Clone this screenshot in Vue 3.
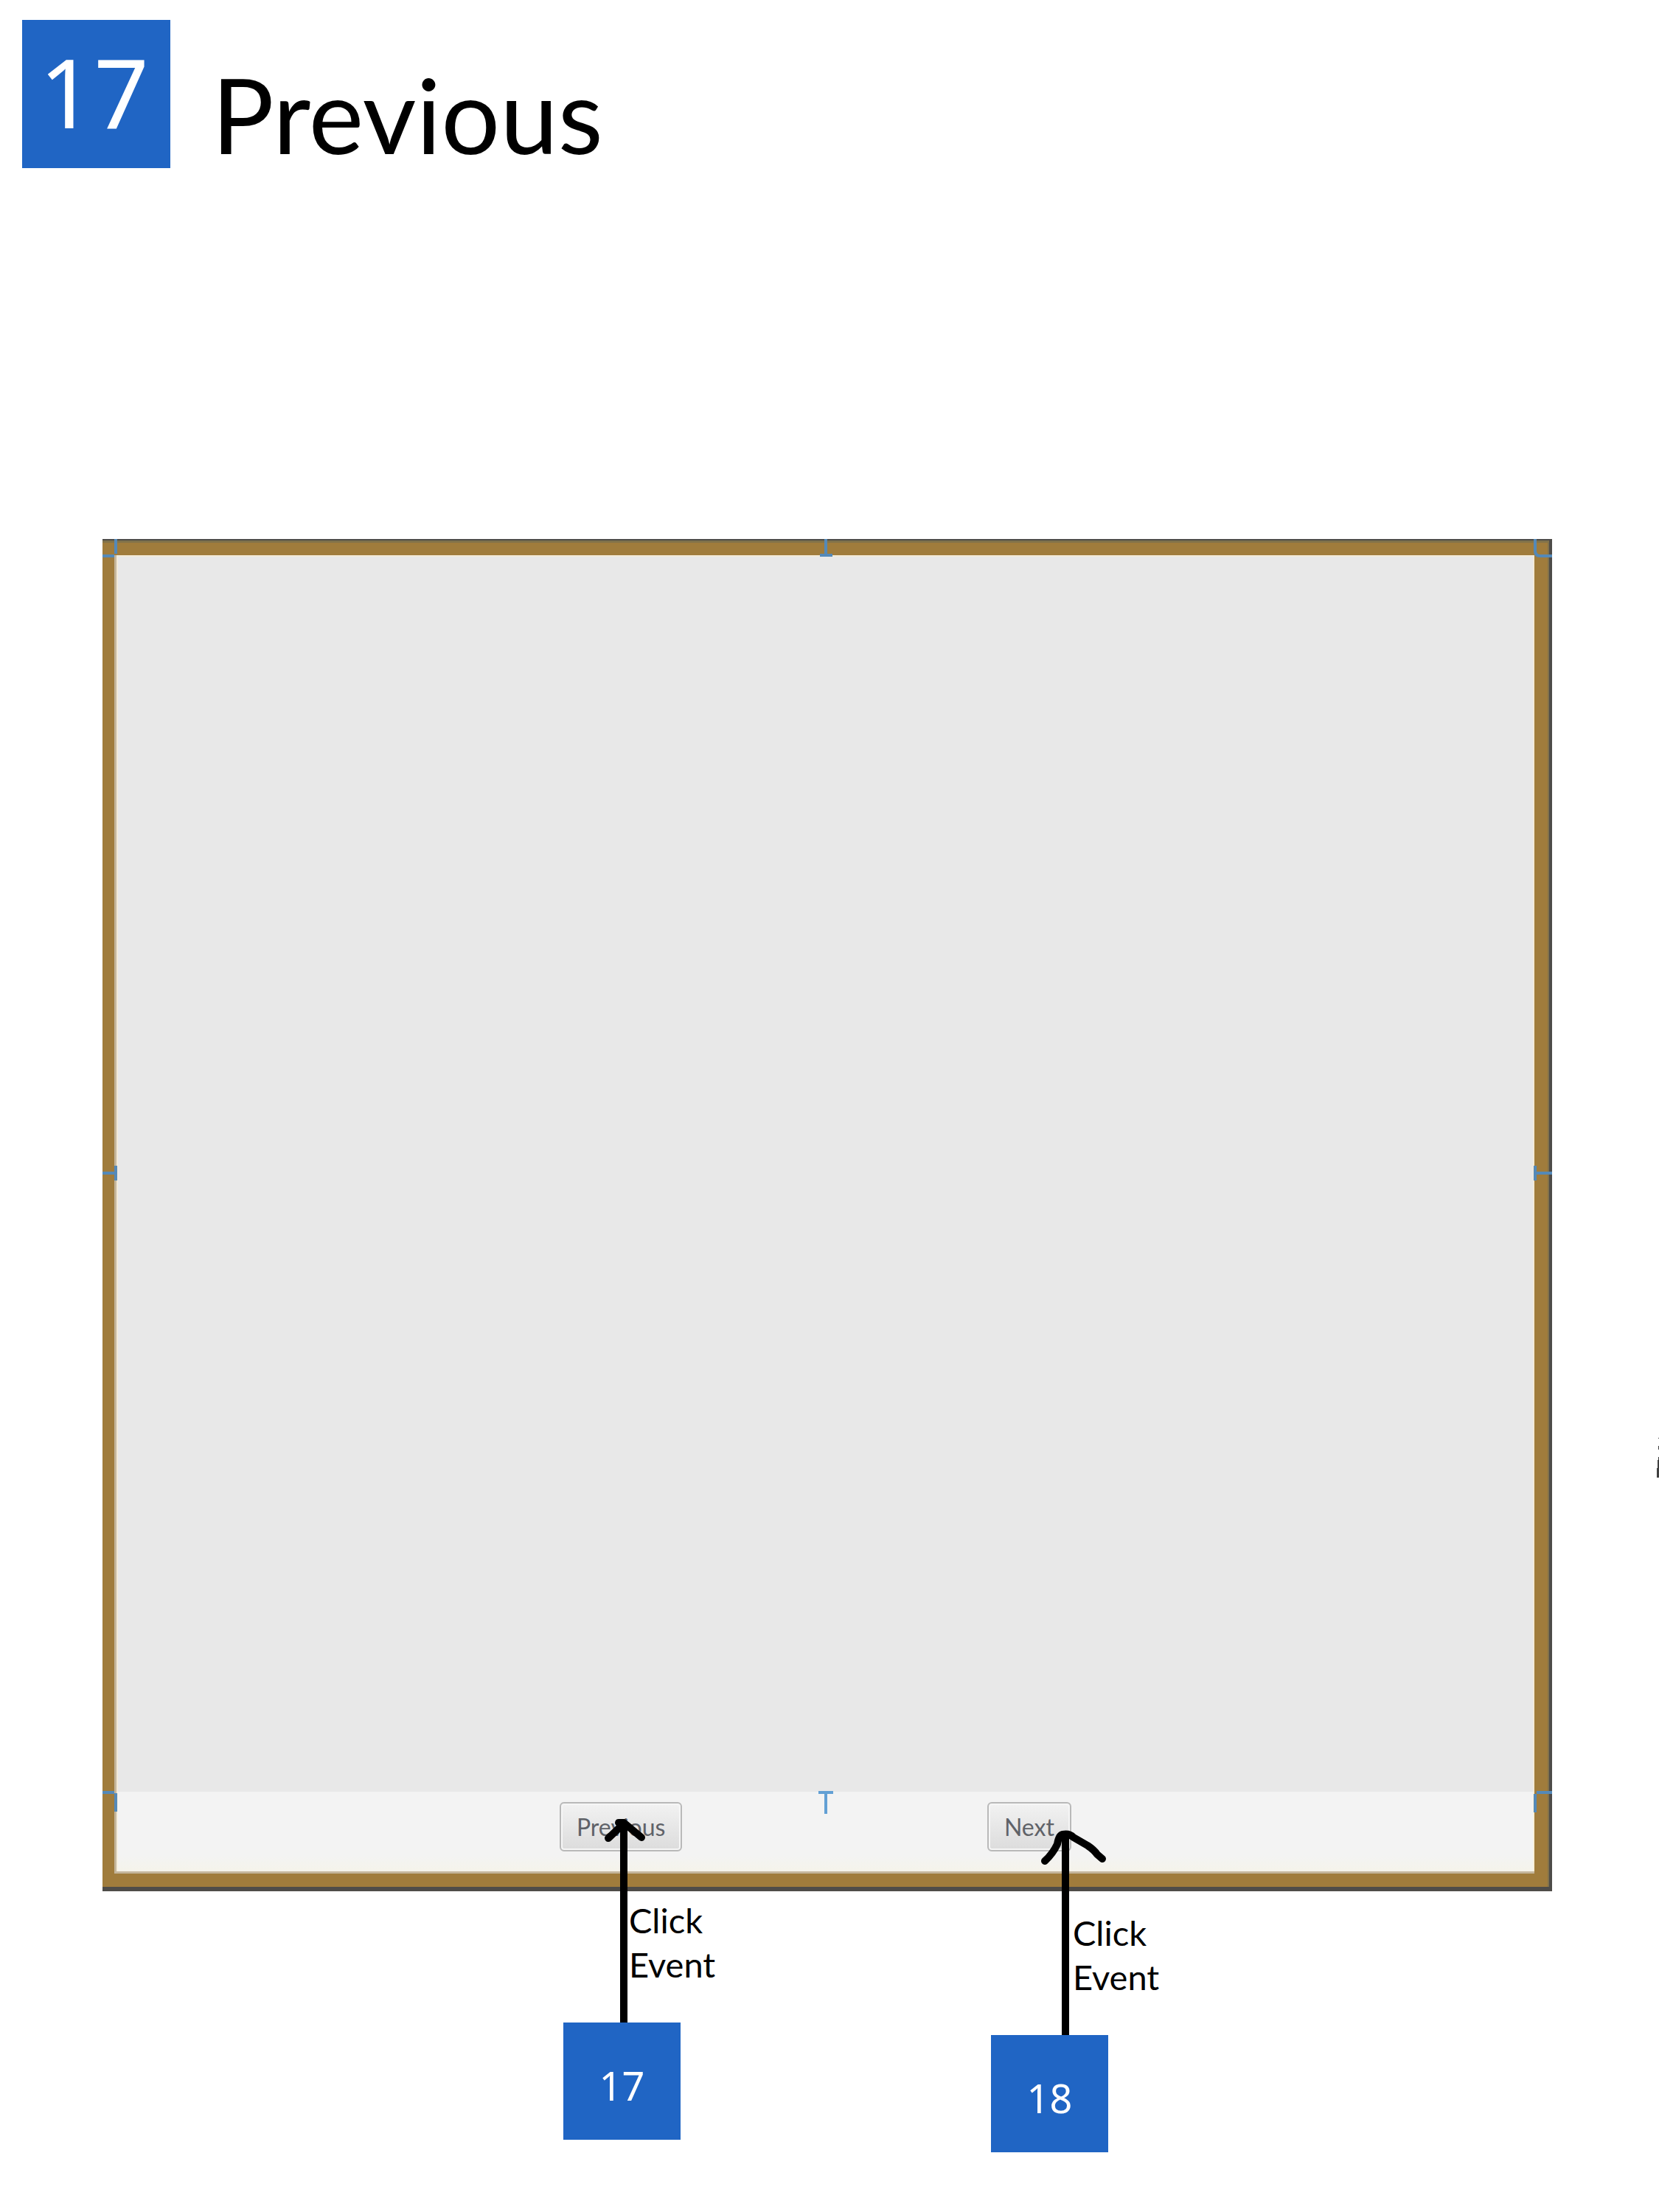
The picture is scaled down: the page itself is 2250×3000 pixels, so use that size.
<script setup>
const controls = [
  {
    id: 'previous',
    label: 'Previous',
    number: 17,
    head: 'M25 42 L45 23 L39 21 L46 21 L70 41',
    shaft: 'M46 22 V292',
  },
  {
    id: 'next',
    label: 'Next',
    number: 18,
    head: 'M37 73 Q48 63 54 50 Q56 38 61 37 Q70 35 76 41 L95 52 Q104 58 108 64 L115 70',
    shaft: 'M65 38 V309',
  },
]

const marks = [
  { id: 'tl', d: 'M18 0 V20 M0 23 H16' },
  { id: 'tc', d: 'M18 0 V20 M10 22 H27' },
  { id: 'tr', d: 'M17 0 V16 Q17 23 24 23 H40' },
  { id: 'ml', d: 'M0 12 H16 M18 2 V22' },
  { id: 'mr', d: 'M40 12 H19 M17 2 V22' },
  { id: 'bl', d: 'M0 2 H16 M18 3 V28' },
  { id: 'bc', d: 'M8 2 H28 M18 2 V31' },
  { id: 'br', d: 'M40 2 H19 M17 4 V29' },
]
</script>

<template>
  <main class="page">
    <header class="heading">
      <span class="badge badge-large">17</span>
      <h1>Previous</h1>
    </header>

    <section class="panel">
      <div class="inner">
        <div class="stage"></div>
        <div class="toolbar">
          <div v-for="c in controls" :key="c.id" class="control" :class="c.id">
            <button type="button">{{ c.label }}</button>
            <svg class="arrow" viewBox="0 0 160 320" width="160" height="320" aria-hidden="true">
              <path class="shaft" :d="c.shaft" />
              <path class="head" :d="c.head" />
            </svg>
            <div class="callout">
              <p>Click<br />Event</p>
              <span class="badge">{{ c.number }}</span>
            </div>
          </div>
        </div>
      </div>
      <svg
        v-for="m in marks"
        :key="m.id"
        class="mark"
        :class="m.id"
        viewBox="0 0 40 32"
        width="40"
        height="32"
        aria-hidden="true"
      >
        <path :d="m.d" />
      </svg>
    </section>

    <svg class="edge" viewBox="0 0 4 56" width="4" height="56" aria-hidden="true">
      <path d="M3 2h1v1H3zM3 13h1v5H3zM3 28h1v28H1V43h1V32h1z" />
    </svg>
  </main>
</template>

<style>
body {
  margin: 0;
  background: #fff;
}
</style>

<style scoped>
.page {
  position: relative;
  box-sizing: border-box;
  min-height: 100vh;
  padding: 27px 0 435px;
  overflow: hidden;
  font-family: Lato, "Noto Sans", sans-serif;
  color: #000;
}

.heading {
  display: flex;
  gap: 56px;
  padding-left: 30px;
}

.heading h1 {
  margin: 44px 0 0;
  font-size: 141px;
  font-weight: 400;
  line-height: 168px;
}

.badge {
  display: flex;
  align-items: center;
  justify-content: center;
  box-sizing: border-box;
  width: 159px;
  height: 159px;
  padding-top: 10px;
  background: #2065c4;
  color: #fff;
  font-family: "Noto Sans", sans-serif;
  font-size: 54px;
  line-height: 60px;
}

.badge-large {
  width: 201px;
  height: 201px;
  padding: 0 6px 8px 0;
  font-size: 130px;
  line-height: 168px;
}

.panel {
  position: relative;
  margin: 492px 145px 0 139px;
  padding: 20px 20px 18px 16px;
  border: solid #4e4c49;
  border-width: 2px 4px 6px 0;
  background: #a07c3c;
  box-shadow: inset -2px 3px 0 #81724a;
}

.inner {
  border: solid #c4b69c;
  border-width: 0 0 3px 3px;
}

.stage {
  aspect-ratio: 1923 / 1677;
  background: #e8e8e8;
  box-shadow: inset 2px 2px 0 #f3ead8, inset -2px 0 0 #f3ead8;
}

.toolbar {
  display: flex;
  box-sizing: border-box;
  height: 108px;
  padding: 14px 0 0 31.25%;
  background: linear-gradient(#f3f3f3 80%, #f5f3ea);
  box-shadow: inset 2px 0 0 #f6efdf, inset -2px 0 0 #f8f0da;
}

.control {
  position: relative;
}

.previous {
  width: 580px;
}

button {
  display: block;
  height: 67px;
  padding: 0 21px;
  border: 2px solid #b9b9b9;
  border-radius: 6px;
  background: linear-gradient(#f2f2f2, #dcdcdc);
  box-shadow: inset 0 0 0 2px #f6f6f6;
  color: #5f6268;
  font-family: Lato, "Noto Sans", sans-serif;
  font-size: 32px;
  line-height: 40px;
}

.arrow {
  position: absolute;
  top: 7px;
  left: 41px;
  fill: none;
  stroke: #000;
  stroke-width: 10px;
  stroke-linejoin: round;
}

.head {
  stroke-linecap: round;
}

.callout {
  position: absolute;
  top: 130px;
  left: 5px;
}

.next .callout {
  top: 147px;
}

.callout p {
  margin: 0 0 49px 89px;
  font-size: 47px;
  line-height: 60px;
}

.next .callout p {
  margin-left: 111px;
}

.mark {
  position: absolute;
  fill: none;
  stroke: #5489b8;
  stroke-width: 4px;
}

.tl,
.tc,
.tr {
  top: -2px;
}

.ml,
.mr {
  top: calc(50% - 67px);
}

.bl,
.bc,
.br {
  bottom: 98px;
}

.tl,
.ml,
.bl {
  left: 0;
}

.tc,
.bc {
  left: calc(50% - 18px);
}

.bc {
  stroke: #62a0d4;
}

.tr,
.mr,
.br {
  right: -4px;
}

.edge {
  position: absolute;
  top: 1948px;
  right: 0;
  fill: #404040;
}
</style>
